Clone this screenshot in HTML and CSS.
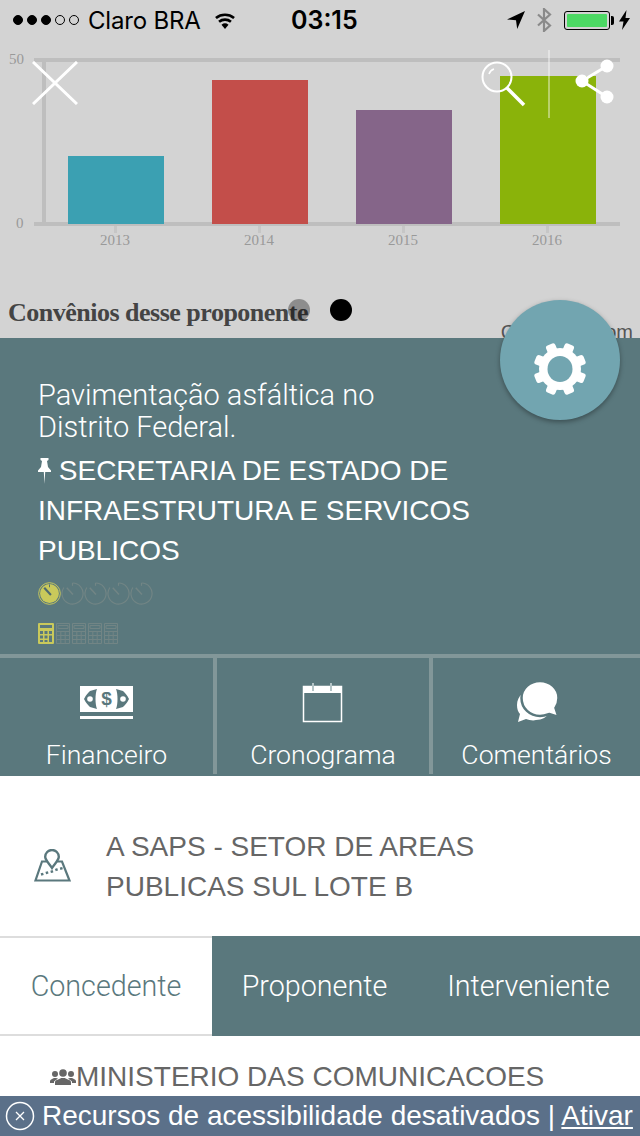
FILE: index.html
```html
<!DOCTYPE html>
<html lang="en">
<head>
  <meta charset="UTF-8">
  <title>Convênios</title>
  <link rel="stylesheet" href="styles.css">
</head>
<body>

<svg class="defs" width="0" height="0">
  <symbol id="clock" viewBox="0 0 24 24">
    <path d="M12 1a11 11 0 1 1-9 4.700" fill="none" stroke="currentColor" stroke-width="1.200"/>
    <path d="M6 6l6.500 7" fill="none" stroke="currentColor" stroke-width="1.500"/>
    <path d="M12 1v3" fill="none" stroke="currentColor" stroke-width="1.200"/>
  </symbol>
  <symbol id="clock-lit" viewBox="0 0 24 24">
    <circle cx="12" cy="12" r="11.300" fill="none" stroke="#c9c95b" stroke-width="1"/>
    <circle cx="12" cy="12" r="9.800" fill="#c9c95b"/>
    <path d="M6.500 6l7 7.500" fill="none" stroke="#4f6a70" stroke-width="2.200"/>
    <path d="M12 2.500v3" fill="none" stroke="#4f6a70" stroke-width="1"/>
  </symbol>
  <symbol id="calc-lit" viewBox="0 0 16 21">
    <path fill-rule="evenodd" fill="#c9c95b" d="M1 0h14a1 1 0 0 1 1 1v19a1 1 0 0 1-1 1H1a1 1 0 0 1-1-1V1a1 1 0 0 1 1-1zM2 2v3h12V2zM2 8v3h3V8zM6.500 8v3h3V8zM11 8v3h3V8zM2 12.500v3h3v-3zM6.500 12.500v3h3v-3zM11 12.500v6.500h3v-6.500zM2 17v2h3v-2zM6.500 17v2h3v-2z"/>
  </symbol>
  <symbol id="calc" viewBox="0 0 14 21">
    <path fill="none" stroke="currentColor" stroke-width="1" d="M.5.500h13v20H.5zM2 2.500h10v3H2zM.5 8.500h13M.5 12.500h13M.5 16.500h13M4.800 8.500v12M9.200 8.500v12"/>
  </symbol>
</svg>

<div class="screen">

  <section class="top">
    <div class="status">
      <span class="signal"><i class="on"></i><i class="on"></i><i class="on"></i><i></i><i></i></span>
      <span class="carrier">Claro BRA</span>
      <svg class="wifi" width="24" height="18" viewBox="2 0 20 18">
        <path d="M12 18l-3.500-4.300a5.500 5.500 0 0 1 7 0z"/>
        <path d="M6.900 11.800a8 8 0 0 1 10.200 0l1.700-2.100a11 11 0 0 0-13.600 0z"/>
        <path d="M3.800 8a13 13 0 0 1 16.400 0l1.700-2.100a15.800 15.800 0 0 0-19.800 0z"/>
      </svg>
      <span class="time">03:15</span>
      <svg class="arrow" width="18" height="18" viewBox="0 0 18 18"><path d="M18 0L0 8.500l9 .7 1.200 8.800z"/></svg>
      <svg class="bt" width="16" height="24" viewBox="0 0 16 24"><path d="M2 6.500l12 11-6 5.500V1l6 5.500-12 11" fill="none" stroke="#8a8a8a" stroke-width="2.200"/></svg>
      <span class="battery"><b></b></span>
      <svg class="bolt" width="11" height="20" viewBox="0 0 11 20"><path d="M7.500 0L0 11.500h4.500L3 20l8-12H6.500z"/></svg>
    </div>

    <svg class="chart" width="640" height="210" viewBox="0 40 640 210">
      <rect x="34" y="58" width="586" height="4" fill="#bebebe"/>
      <rect x="42" y="60" width="4" height="164" fill="#bebebe"/>
      <rect x="34" y="222" width="586" height="4" fill="#bebebe"/>
      <g fill="#c6c6c6">
        <rect x="114" y="226" width="3" height="7"/>
        <rect x="258" y="226" width="3" height="7"/>
        <rect x="402" y="226" width="3" height="7"/>
        <rect x="546" y="226" width="3" height="7"/>
      </g>
      <rect x="68" y="156" width="96" height="68" fill="#3ba0b2"/>
      <rect x="212" y="80" width="96" height="144" fill="#c34e4a"/>
      <rect x="356" y="110" width="96" height="114" fill="#856589"/>
      <rect x="500" y="76" width="96" height="148" fill="#8ab30a"/>
      <g class="axis-label">
        <text x="9" y="64">50</text>
        <text x="16" y="228">0</text>
        <text x="115" y="245" text-anchor="middle">2013</text>
        <text x="259" y="245" text-anchor="middle">2014</text>
        <text x="403" y="245" text-anchor="middle">2015</text>
        <text x="547" y="245" text-anchor="middle">2016</text>
      </g>
    </svg>

    <div class="caption">
      <h2>Convênios desse proponente</h2>
      <span class="compare">Comparar com</span>
    </div>

    <span class="dot dot-off"></span>
    <span class="dot dot-on"></span>

    <svg class="tool close" width="46" height="44" viewBox="0 0 46 44">
      <path d="M1 1l44 42M45 1L1 43" stroke="#fff" stroke-width="3" fill="none"/>
    </svg>
    <svg class="tool search" width="46" height="46" viewBox="0 0 46 46">
      <circle cx="16" cy="16" r="14.500" fill="none" stroke="#fff" stroke-width="2"/>
      <path d="M8 13a8 8 0 0 1 5-5" fill="none" stroke="#fff" stroke-width="1.500"/>
      <path d="M26 27l17 17" stroke="#fff" stroke-width="3.500" fill="none"/>
    </svg>
    <span class="tool divider"></span>
    <svg class="tool share" width="42" height="46" viewBox="0 0 42 46">
      <path d="M8 22L33 7M8 22l25 16" stroke="#fff" stroke-width="3" fill="none"/>
      <circle cx="8" cy="22" r="6.500" fill="#fff"/>
      <circle cx="33" cy="7" r="6.500" fill="#fff"/>
      <circle cx="33" cy="38" r="6.500" fill="#fff"/>
    </svg>
  </section>

  <button class="fab">
    <svg width="54" height="54" viewBox="-27 -27 54 54">
      <g fill="#fff">
        <circle r="21"/>
        <rect x="-5" y="-26.500" width="10" height="12" rx="2.500" transform="rotate(22.500)"/>
        <rect x="-5" y="-26.500" width="10" height="12" rx="2.500" transform="rotate(67.500)"/>
        <rect x="-5" y="-26.500" width="10" height="12" rx="2.500" transform="rotate(112.500)"/>
        <rect x="-5" y="-26.500" width="10" height="12" rx="2.500" transform="rotate(157.500)"/>
        <rect x="-5" y="-26.500" width="10" height="12" rx="2.500" transform="rotate(202.500)"/>
        <rect x="-5" y="-26.500" width="10" height="12" rx="2.500" transform="rotate(247.500)"/>
        <rect x="-5" y="-26.500" width="10" height="12" rx="2.500" transform="rotate(292.500)"/>
        <rect x="-5" y="-26.500" width="10" height="12" rx="2.500" transform="rotate(337.500)"/>
      </g>
      <ellipse rx="12.500" ry="13" fill="#72a5b0"/>
    </svg>
  </button>

  <section class="panel">
    <h1>Pavimentação asfáltica no Distrito Federal.</h1>
    <p class="agency">
      <svg class="pin" width="13" height="26" viewBox="0 0 13 26">
        <path fill="#fff" d="M2.500 0h8v2L9 3l1 6 3 3.500V14H7.200L6.500 26l-.7-12H0v-1.500L3 9l1-6-1.500-1z"/>
      </svg>
      SECRETARIA DE ESTADO DE INFRAESTRUTURA E SERVICOS PUBLICOS
    </p>
    <div class="rating clocks">
      <svg width="23" height="23"><use href="#clock-lit"/></svg>
      <svg width="23" height="23"><use href="#clock"/></svg>
      <svg width="23" height="23"><use href="#clock"/></svg>
      <svg width="23" height="23"><use href="#clock"/></svg>
      <svg width="23" height="23"><use href="#clock"/></svg>
    </div>
    <div class="rating calcs">
      <svg width="16" height="21"><use href="#calc-lit"/></svg>
      <svg width="14" height="21"><use href="#calc"/></svg>
      <svg width="14" height="21"><use href="#calc"/></svg>
      <svg width="14" height="21"><use href="#calc"/></svg>
      <svg width="14" height="21"><use href="#calc"/></svg>
    </div>
  </section>

  <nav class="menu">
    <a class="menu-item">
      <svg width="53" height="42" viewBox="0 0 53 42">
        <rect y="5" width="53" height="26" fill="#fff"/>
        <rect y="35" width="53" height="3" fill="#fff"/>
        <g fill="#5a787d">
          <path d="M4 18c2-4 4-6 6-8l7-2c-2 5-2 15 0 20l-7-2c-2-2-4-4-6-8z"/>
          <path d="M49 18c-2-4-4-6-6-8l-7-2c2 5 2 15 0 20l7-2c2-2 4-4 6-8z"/>
        </g>
        <circle cx="10" cy="18" r="2.800" fill="#fff"/>
        <circle cx="43" cy="18" r="2.800" fill="#fff"/>
        <text class="money-sign" x="26.500" y="24" text-anchor="middle">$</text>
      </svg>
      Financeiro
    </a>
    <a class="menu-item">
      <svg width="42" height="42" viewBox="0 0 42 42">
        <rect x="1.500" y="5.500" width="38" height="35" fill="none" stroke="#fff" stroke-width="1.500"/>
        <rect x="1" y="5" width="39" height="7" fill="#fff"/>
        <path d="M11 2v8M29 2v8" stroke="#b4c4c6" stroke-width="2"/>
      </svg>
      Cronograma
    </a>
    <a class="menu-item">
      <svg width="44" height="42" viewBox="0 0 44 42">
        <path fill="#fff" d="M19 8c-9 0-17 7-17 16 0 4 1 7 3 9l-2 8 8-3c3 1 7 2 10 1 6 0 11-3 14-8z"/>
        <path fill="#fff" stroke="#5a787d" stroke-width="2.500" d="M25 0c10 0 18.500 7.500 18.500 17 0 4-1 7-3 10l3 9-9-3c-3 1-6 2-9.500 2C15 35 6.500 27.500 6.500 17 6.500 7.500 15 0 25 0z"/>
      </svg>
      Comentários
    </a>
  </nav>

  <section class="address">
    <svg width="40" height="34" viewBox="0 0 40 34">
      <path d="M15 12.500H10L3.500 31.500H37.500L30 12.500H25" fill="none" stroke="#5a787d" stroke-width="2.200"/>
      <path d="M20 1a6.800 6.800 0 0 0-6.800 6.800c0 3.500 4 6.500 6.800 11.200 2.800-4.700 6.800-7.700 6.800-11.200A6.800 6.800 0 0 0 20 1z" fill="none" stroke="#5a787d" stroke-width="2.400"/>
      <path d="M9 25.500l5-1.500 6-1.500 5-2 6-1.500" fill="none" stroke="#5a787d" stroke-width="2.400" stroke-dasharray="2.500 2.500"/>
    </svg>
    <p>A SAPS - SETOR DE AREAS PUBLICAS SUL LOTE B</p>
  </section>

  <div class="tabs">
    <span class="tab active">Concedente</span>
    <span class="tab tab-mid">Proponente</span>
    <span class="tab">Interveniente</span>
  </div>

  <div class="party">
    <svg width="26" height="16" viewBox="0 0 26 16">
      <circle cx="13" cy="4" r="3.800" fill="#666"/>
      <path fill="#666" d="M5 16v-3c0-2 5-3 6-4h4c1 1 6 2 6 4v3z"/>
      <circle cx="5" cy="5" r="3" fill="#666"/>
      <circle cx="21" cy="5" r="3" fill="#666"/>
      <path fill="#666" d="M0 14v-2c0-1.500 3-2.500 4-3h2l2 .5-4 3V14zM26 14v-2c0-1.500-3-2.500-4-3h-2l-2 .5 4 3V14z"/>
    </svg>
    MINISTERIO DAS COMUNICACOES
  </div>

  <footer class="access">
    <svg width="30" height="30" viewBox="0 0 30 30">
      <circle cx="15" cy="15" r="13.500" fill="none" stroke="#fff" stroke-width="1.500"/>
      <path d="M11 11l8 8M19 11l-8 8" stroke="#fff" stroke-width="1.300"/>
    </svg>
    <span>Recursos de acessibilidade desativados | <u>Ativar</u></span>
  </footer>

</div>

</body>
</html>
```

FILE: styles.css
```css
* {
  box-sizing: border-box;
}
body {
  margin: 0;
  font-family: "Liberation Sans", Arial, sans-serif;
}
.defs {
  position: absolute;
}
.screen {
  position: relative;
  width: 640px;
  height: 1136px;
  overflow: hidden;
  background: #fff;
}

/* top area */
.top {
  position: relative;
  height: 338px;
  overflow: hidden;
  background: #d3d3d3;
}
.status {
  display: flex;
  align-items: center;
  height: 40px;
  padding-left: 13px;
  font-family: Inter, "Noto Sans", sans-serif;
  font-size: 24px;
  color: #000;
}
.signal {
  display: flex;
  gap: 4px;
}
.signal i {
  width: 10px;
  height: 10px;
  border: 1px solid #000;
  border-radius: 50%;
}
.signal i.on {
  background: #000;
}
.carrier {
  margin-left: 9px;
  width: 125px;
  letter-spacing: -0.2px;
}
.time {
  margin-left: 54px;
  font-weight: 600;
  font-size: 25px;
  width: 216px;
}
.bt {
  margin-left: 11px;
}
.battery {
  position: relative;
  width: 46px;
  height: 19px;
  margin-left: 12px;
  padding: 2px;
  border: 1px solid #000;
  border-radius: 3px;
}
.battery b {
  display: block;
  height: 100%;
  background: #4cd964;
  border-radius: 1px;
}
.battery::after {
  content: "";
  position: absolute;
  top: 4px;
  right: -5px;
  width: 3px;
  height: 9px;
  background: #000;
  border-radius: 0 2px 2px 0;
}
.bolt {
  margin-left: 9px;
}
.chart {
  display: block;
}
.axis-label text {
  font-family: "Liberation Serif", serif;
  font-size: 15px;
  fill: #999;
}
.caption {
  display: flex;
  justify-content: space-between;
  padding: 0 7px 0 8px;
  margin-top: 48px;
}
.caption h2 {
  margin: 0;
  font-family: "Liberation Serif", serif;
  font-size: 26px;
  letter-spacing: -0.5px;
  line-height: 30px;
  color: #444;
}
.compare {
  margin-top: 23px;
  font-size: 20px;
  color: #555;
}
.dot {
  position: absolute;
  top: 299px;
  width: 22px;
  height: 22px;
  border-radius: 50%;
}
.dot-off {
  left: 288px;
  background: rgba(0, 0, 0, 0.33);
}
.dot-on {
  left: 330px;
  background: #000;
}
.tool {
  position: absolute;
}
.close {
  left: 32px;
  top: 61px;
}
.search {
  left: 481px;
  top: 61px;
}
.divider {
  left: 548px;
  top: 50px;
  width: 2px;
  height: 68px;
  background: rgba(255, 255, 255, 0.4);
}
.share {
  left: 574px;
  top: 59px;
}
.fab {
  position: absolute;
  left: 500px;
  top: 300px;
  z-index: 2;
  display: flex;
  align-items: center;
  justify-content: center;
  width: 120px;
  height: 120px;
  padding: 18px 0 0;
  border: none;
  border-radius: 50%;
  background: #72a5b0;
  box-shadow: 0 2px 5px rgba(0, 0, 0, 0.35);
}

/* teal panel */
.panel {
  height: 320px;
  padding: 41px 150px 0 38px;
  background: #5a787d;
  border-bottom: 4px solid #829799;
  color: #fff;
}
.panel h1 {
  margin: 0;
  width: 360px;
  font-family: Roboto, sans-serif;
  font-weight: 300;
  font-size: 29px;
  line-height: 32px;
}
.agency {
  margin: 8px 0 0;
  width: 450px;
  font-size: 28px;
  line-height: 40px;
}
.pin {
  vertical-align: -4px;
}
.rating {
  display: flex;
  color: #728585;
}
.clocks {
  margin-top: 11px;
  gap: 0;
}
.calcs {
  margin-top: 18px;
  gap: 2px;
}

/* three buttons */
.menu {
  display: grid;
  grid-template-columns: 217px 216px 1fr;
  height: 118px;
  background: #5a787d;
}
.menu-item {
  display: flex;
  flex-direction: column;
  align-items: center;
  padding-top: 23px;
  height: 116px;
  border-right: 4px solid #829799;
  font-family: Roboto, sans-serif;
  font-weight: 300;
  font-size: 26.600px;
  line-height: 30px;
  color: #fff;
}
.menu-item svg {
  margin-bottom: 17px;
}
.menu-item:last-child {
  border-right: none;
}
.money-sign {
  font-size: 19px;
  font-weight: 700;
  fill: #5a787d;
  font-family: "Liberation Sans", sans-serif;
}

/* address */
.address {
  display: flex;
  align-items: center;
  gap: 34px;
  height: 160px;
  padding: 52px 0 30px 32px;
  color: #666;
}
.address svg {
  margin-top: -2px;
}
.address p {
  margin: 0;
  width: 440px;
  font-size: 28px;
  line-height: 40px;
}

/* tabs */
.tabs {
  display: grid;
  grid-template-columns: 212px 205px 1fr;
  height: 100px;
  background: #5a787d;
  color: #fff;
  font-family: Roboto, sans-serif;
  font-weight: 300;
  font-size: 28.700px;
}
.tab {
  display: flex;
  align-items: center;
  justify-content: center;
}
.tab.active {
  background: #fff;
  color: #5a787d;
  border-top: 2px solid #ddd;
  border-bottom: 2px solid #ddd;
}
.party {
  display: flex;
  align-items: center;
  height: 60px;
  padding: 21px 0 0 50px;
  font-size: 28px;
  color: #666;
}
.access {
  position: absolute;
  left: 0;
  bottom: 0;
  z-index: 3;
  display: flex;
  align-items: center;
  gap: 7px;
  width: 100%;
  height: 40px;
  padding-left: 5px;
  background: #5b7089;
  color: #fff;
  font-size: 28px;
  white-space: nowrap;
}
```
